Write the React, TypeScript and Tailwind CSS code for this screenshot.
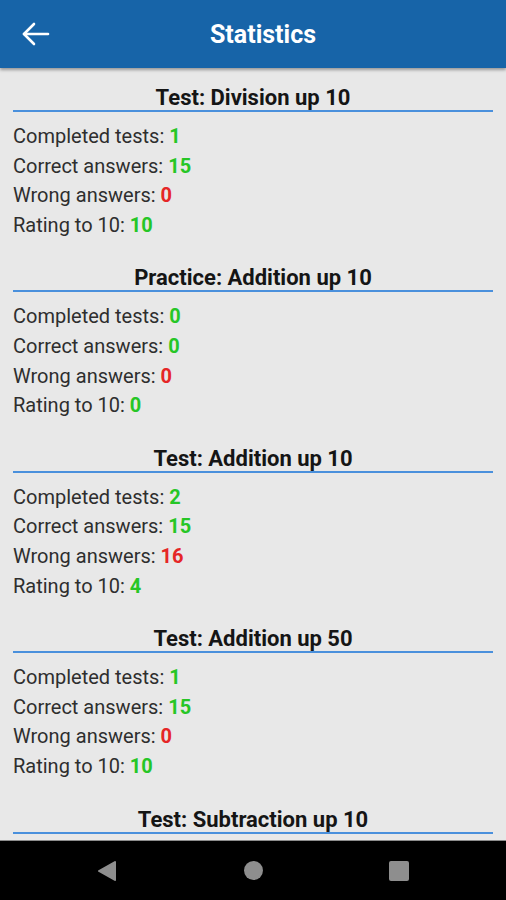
import React from "react";

type Stat = { title: string; completed?: string; correct?: string; wrong?: string; rating?: string };

const stats: Stat[] = [
  { title: "Test: Division up 10", completed: "1", correct: "15", wrong: "0", rating: "10" },
  { title: "Practice: Addition up 10", completed: "0", correct: "0", wrong: "0", rating: "0" },
  { title: "Test: Addition up 10", completed: "2", correct: "15", wrong: "16", rating: "4" },
  { title: "Test: Addition up 50", completed: "1", correct: "15", wrong: "0", rating: "10" },
  { title: "Test: Subtraction up 10" },
];

function Row({ label, value, red }: { label: string; value: string; red?: boolean }) {
  return (
    <div className="h-[29.6px] leading-[29.6px] text-[20px] text-[#2e2e2e] whitespace-nowrap">
      {label}{" "}
      <span className={red ? "font-bold text-[#e52626]" : "font-bold text-[#26c626]"}>{value}</span>
    </div>
  );
}

function Section({ s }: { s: Stat }) {
  return (
    <div className="pb-[25px]">
      <div className="mx-[13px] h-[27px] border-b-2 border-[#4a90dc] text-center text-[22px] leading-[25px] font-bold text-[#151515] whitespace-nowrap">
        {s.title}
      </div>
      {s.completed !== undefined && (
        <div className="px-[13px] pt-[10px]">
          <Row label="Completed tests:" value={s.completed} />
          <Row label="Correct answers:" value={s.correct!} />
          <Row label="Wrong answers:" value={s.wrong!} red />
          <Row label="Rating to 10:" value={s.rating!} />
        </div>
      )}
    </div>
  );
}

export default function App() {
  return (
    <div
      className="w-[506px] h-[900px] flex flex-col bg-[#e8e8e8] overflow-hidden"
      style={{ fontFamily: "Roboto, 'Noto Sans', sans-serif" }}
    >
      <div className="relative h-[68px] shrink-0 bg-[#1764a8] flex items-center shadow-[0_2px_3px_rgba(0,0,0,0.35)] z-10">
        <svg width="30" height="26" viewBox="0 0 30 26" className="ml-[20px]" fill="none" stroke="white" strokeWidth="2.6" strokeLinecap="round" strokeLinejoin="round">
          <path d="M4 13H28" />
          <path d="M14 3L4 13L14 23" />
        </svg>
        <div className="absolute left-[20px] right-0 text-center text-white font-bold text-[25px] top-[20px] leading-[30px] pointer-events-none">
          Statistics
        </div>
      </div>
      <div className="flex-1 overflow-hidden pt-[17px]">
        {stats.map((s) => (
          <Section key={s.title} s={s} />
        ))}
      </div>
      <div className="h-[60px] shrink-0 bg-black border-t border-[#8c8c8c] flex items-center justify-center">
        <div className="w-[146px] flex justify-center">
          <svg width="20" height="22" viewBox="0 0 20 22">
            <path d="M18 2 L2 11 L18 20 Z" fill="#8e8e8e" stroke="#8e8e8e" strokeWidth="2" strokeLinejoin="round" />
          </svg>
        </div>
        <div className="w-[146px] flex justify-center">
          <div className="w-[19px] h-[19px] rounded-full bg-[#8e8e8e]" />
        </div>
        <div className="w-[146px] flex justify-center">
          <div className="w-[20px] h-[20px] rounded-[2px] bg-[#8e8e8e]" />
        </div>
      </div>
    </div>
  );
}
